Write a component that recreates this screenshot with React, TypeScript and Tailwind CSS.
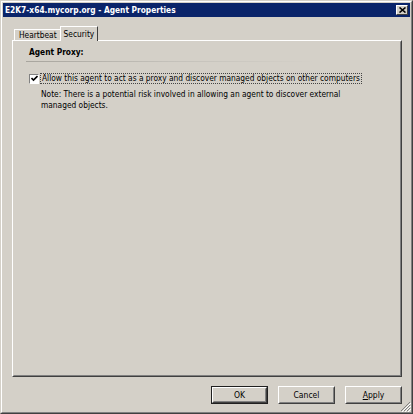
import React from "react";

const font = { fontFamily: '"DejaVu Sans Condensed", "Liberation Sans", sans-serif' };

function Btn({ label, def, u }: { label: string; def?: boolean; u?: number }) {
  const text =
    u === undefined ? (
      label
    ) : (
      <>
        {label.slice(0, u)}
        <span className="underline">{label[u]}</span>
        {label.slice(u + 1)}
      </>
    );
  if (def) {
    return (
      <div className="w-[57px] h-[18px] border border-[#202020] flex">
        <div className="flex-1 border border-t-white border-l-white border-r-[#404040] border-b-[#404040] flex">
          <div className="flex-1 border border-t-[#d4d0c8] border-l-[#d4d0c8] border-r-[#808080] border-b-[#808080] flex items-center justify-center text-[8.5px] text-black">
            {text}
          </div>
        </div>
      </div>
    );
  }
  return (
    <div className="w-[57px] h-[18px] border border-t-white border-l-white border-r-[#404040] border-b-[#404040] flex">
      <div className="flex-1 border border-t-[#d4d0c8] border-l-[#d4d0c8] border-r-[#808080] border-b-[#808080] flex items-center justify-center text-[8.5px] text-black">
        {text}
      </div>
    </div>
  );
}

export default function App() {
  return (
    <div style={font} className="w-[413px] h-[414px] bg-[#d4d0c8] relative select-none">
      <div className="w-full h-full border border-t-[#d4d0c8] border-l-[#d4d0c8] border-r-[#404040] border-b-[#404040]">
        <div className="w-full h-full border border-t-white border-l-white border-r-[#808080] border-b-[#808080] p-px flex flex-col">
          {/* Title bar */}
          <div className="h-[14px] bg-[#0a246a] flex items-center justify-between pl-[2px] pr-[2px]">
            <span className="text-white font-bold text-[8.3px] leading-none">
              E2K7-x64.mycorp.org - Agent Properties
            </span>
            <div className="w-[12px] h-[10px] bg-[#d4d0c8] border border-t-white border-l-white border-r-[#404040] border-b-[#404040] flex items-center justify-center">
              <svg width="7" height="6" viewBox="0 0 7 6">
                <path d="M0.5 0.5 L6.5 5.5 M6.5 0.5 L0.5 5.5" stroke="#000" strokeWidth="1.6" />
              </svg>
            </div>
          </div>

          {/* Tabs */}
          <div className="mt-[10px] pl-[9px] pr-[8px] flex flex-col">
            <div className="flex items-end h-[14px] relative z-10 -mb-px">
              <div className="h-[12px] ml-[2px] border-t border-l border-t-white border-l-white flex items-center px-[4px] text-[8.3px] text-black">
                Heartbeat
              </div>
              <div className="h-[15px] bg-[#d4d0c8] border-t border-l border-r border-t-white border-l-white border-r-[#404040] flex items-center px-[3px] -ml-px text-[8.3px] text-black">
                Security
              </div>
            </div>
            {/* Panel */}
            <div className="h-[337px] border border-t-white border-l-white border-r-[#404040] border-b-[#404040]">
              <div className="h-full border border-transparent border-r-[#808080] border-b-[#808080] pl-[15px] pr-[10px] pt-[5px]">
                <div className="font-bold text-[8.3px] text-black leading-[11px]">Agent Proxy:</div>
                <div className="mt-[3px] ml-[-3px] h-px w-[290px] bg-gradient-to-r from-[#a8a59e] via-[#c4c1ba] to-transparent" />
                <div className="mt-[11px] flex items-center">
                  <div className="w-[10px] h-[10px] bg-white border border-t-[#808080] border-l-[#808080] border-r-white border-b-white flex items-center justify-center">
                    <svg width="7" height="7" viewBox="0 0 7 7">
                      <path d="M0.5 3 L2.5 5 L6.5 1" stroke="#000" strokeWidth="1.6" fill="none" />
                    </svg>
                  </div>
                  <div className="ml-[1px] px-[1px] border border-dotted border-[#444] text-[8.3px] leading-[9px] text-black">
                    Allow this agent to act as a proxy and discover managed objects on other computers
                  </div>
                </div>
                <div className="mt-[5px] ml-[12px] text-[8.3px] leading-[11px] text-black w-[300px]">
                  Note: There is a potential risk involved in allowing an agent to discover external managed objects.
                </div>
              </div>
            </div>
          </div>

          {/* Buttons */}
          <div className="mt-[9px] flex justify-end gap-[10px] pr-[8px]">
            <Btn label="OK" def />
            <Btn label="Cancel" />
            <Btn label="Apply" u={0} />
          </div>
        </div>
      </div>
      {/* resize grip */}
      <svg className="absolute right-[2px] bottom-[2px]" width="11" height="11" viewBox="0 0 11 11">
        <path d="M10 1 L1 10 M10 4 L4 10 M10 7 L7 10" stroke="#808080" strokeWidth="1" />
        <path d="M11 2 L2 11 M11 5 L5 11 M11 8 L8 11" stroke="#ffffff" strokeWidth="1" />
      </svg>
    </div>
  );
}
